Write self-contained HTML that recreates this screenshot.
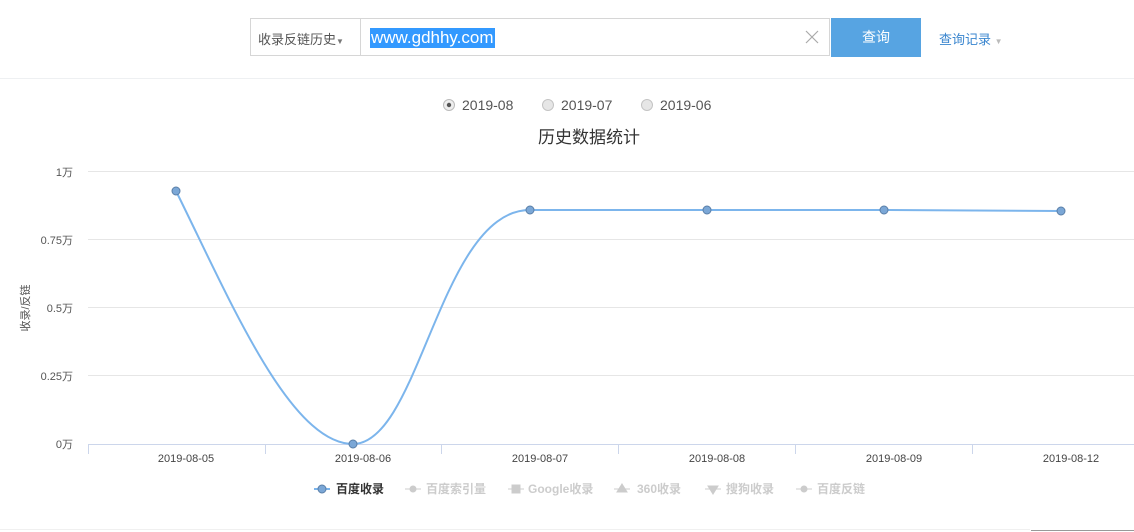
<!DOCTYPE html>
<html><head><meta charset="utf-8"><style>
body{margin:0;width:1134px;height:532px;background:#fff;font-family:"Liberation Sans","Noto Sans CJK SC",sans-serif;position:relative;overflow:hidden}
.a{position:absolute}
</style></head><body>
<div class="a" style="left:0;top:78px;width:1134px;height:1px;background:#eef0f2"></div>
<div class="a" style="left:250px;top:18px;width:580px;height:38px;border:1px solid #d6d6d6;box-sizing:border-box"></div>
<div class="a" style="left:360px;top:19px;width:1px;height:37px;background:#d6d6d6"></div>
<div class="a" style="left:258px;top:29px;font-size:13px;color:#555">收录反链历史<span style="font-size:8px;color:#777">▼</span></div>
<div class="a" style="left:370px;top:28px;height:20px;background:#3399ff;color:#fff;font-size:17px;line-height:20px;padding:0 1px">www.gdhhy.com</div>
<svg class="a" style="left:805px;top:30px" width="14" height="14"><path d="M1 1L13 13M13 1L1 13" stroke="#aaa" stroke-width="1.2"/></svg>
<div class="a" style="left:831px;top:18px;width:90px;height:39px;background:#57a4e2;color:#fff;font-size:14px;line-height:39px;text-align:center">查询</div>
<div class="a" style="left:939px;top:29px;font-size:13px;color:#3a86cf">查询记录 <span style="font-size:8px;color:#bbb">▼</span></div>
<svg class="a" style="left:0;top:0" width="1134" height="532">
<g font-family="Liberation Sans,sans-serif" font-size="14" fill="#555">
<circle cx="449" cy="105" r="5.5" fill="#eee" stroke="#bbb"/><circle cx="449" cy="105" r="2.2" fill="#555"/>
<text x="462" y="110">2019-08</text>
<circle cx="548" cy="105" r="5.5" fill="#e6e6e6" stroke="#c4c4c4"/><text x="561" y="110">2019-07</text>
<circle cx="647" cy="105" r="5.5" fill="#e6e6e6" stroke="#c4c4c4"/><text x="660" y="110">2019-06</text>
</g>
<text x="589" y="143" text-anchor="middle" font-size="17" fill="#333" font-family="Liberation Sans,Noto Sans CJK SC,sans-serif">历史数据统计</text>
<g stroke="#e6e6e6" stroke-width="1">
<line x1="88" y1="171.5" x2="1134" y2="171.5"/><line x1="88" y1="239.5" x2="1134" y2="239.5"/><line x1="88" y1="307.5" x2="1134" y2="307.5"/><line x1="88" y1="375.5" x2="1134" y2="375.5"/></g>
<line x1="88" y1="444.5" x2="1134" y2="444.5" stroke="#ccd6eb"/>
<g stroke="#ccd6eb"><line x1="88.5" y1="444" x2="88.5" y2="454"/><line x1="265.5" y1="444" x2="265.5" y2="454"/><line x1="441.5" y1="444" x2="441.5" y2="454"/><line x1="618.5" y1="444" x2="618.5" y2="454"/><line x1="795.5" y1="444" x2="795.5" y2="454"/><line x1="972.5" y1="444" x2="972.5" y2="454"/></g>
<g font-size="11" fill="#555" text-anchor="end" font-family="Liberation Sans,Noto Sans CJK SC,sans-serif">
<text x="73" y="176">1万</text><text x="73" y="244">0.75万</text><text x="73" y="312">0.5万</text><text x="73" y="380">0.25万</text><text x="73" y="448">0万</text></g>
<text transform="translate(29,308) rotate(-90)" text-anchor="middle" font-size="11" fill="#555" font-family="Liberation Sans,Noto Sans CJK SC,sans-serif">收录/反链</text>
<g font-size="11" fill="#444" text-anchor="middle"><text x="186" y="462">2019-08-05</text><text x="363" y="462">2019-08-06</text><text x="540" y="462">2019-08-07</text><text x="717" y="462">2019-08-08</text><text x="894" y="462">2019-08-09</text><text x="1071" y="462">2019-08-12</text></g>
<path d="M176 191 C230 300 290 444 353 444 C420 444 440 210 530 210 L884 210 L1061 211" fill="none" stroke="#7cb5ec" stroke-width="2"/>
<g fill="#7ba7d6" stroke="#5a7fa8"><circle cx="176" cy="191" r="4"/><circle cx="353" cy="444" r="4"/><circle cx="530" cy="210" r="4"/><circle cx="707" cy="210" r="4"/><circle cx="884" cy="210" r="4"/><circle cx="1061" cy="211" r="4"/></g>
<g font-size="12" font-weight="bold" font-family="Liberation Sans,Noto Sans CJK SC,sans-serif">
<line x1="314" y1="489" x2="330" y2="489" stroke="#7cb5ec" stroke-width="2"/><circle cx="322" cy="489" r="4" fill="#7ba7d6" stroke="#5a7fa8"/>
<text x="336" y="493" fill="#333">百度收录</text>
<g fill="#ccc" stroke="#ccc"><line x1="405" y1="489" x2="421" y2="489"/><circle cx="413" cy="489" r="3"/>
<line x1="508" y1="489" x2="524" y2="489"/><rect x="512" y="485" width="8" height="8"/>
<line x1="614" y1="489" x2="630" y2="489"/><path d="M622 484L627 492L617 492Z"/>
<line x1="705" y1="489" x2="721" y2="489"/><path d="M708 486L718 486L713 494Z"/>
<line x1="796" y1="489" x2="812" y2="489"/><circle cx="804" cy="489" r="3"/></g>
<g fill="#ccc"><text x="426" y="493">百度索引量</text><text x="528" y="493">Google收录</text><text x="637" y="493">360收录</text><text x="726" y="493">搜狗收录</text><text x="817" y="493">百度反链</text></g></g>
<line x1="0" y1="529.5" x2="1030" y2="529.5" stroke="#f0f0f0"/>
<line x1="1031" y1="530.5" x2="1134" y2="530.5" stroke="#999"/>
</svg>
</body></html>
